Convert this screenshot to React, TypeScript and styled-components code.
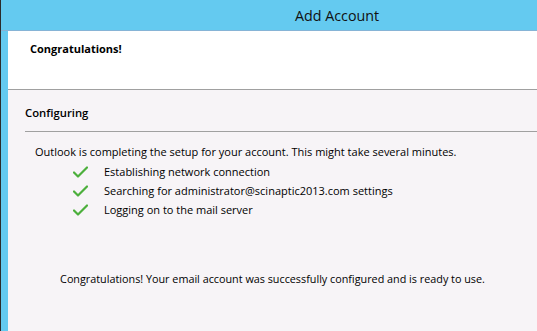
import styled, { createGlobalStyle } from 'styled-components';

const GlobalStyle = createGlobalStyle`
  html, body {
    margin: 0;
    padding: 0;
    background: #f7f4f7;
  }
  body {
    font-family: "Open Sans", "Noto Sans", "Liberation Sans", sans-serif;
    color: #000;
  }
`;

const Window = styled.div`
  width: 537px;
  height: 331px;
  display: flex;
  flex-direction: column;
  background: #64caf0;
  border-left: 1px solid #2b2b2b;
  box-sizing: border-box;
  overflow: hidden;
`;

const TitleBar = styled.div`
  height: 30px;
  display: flex;
  align-items: center;
  justify-content: center;
  padding-left: 136px;
  font-size: 14.3px;
  color: #111;
  border-bottom: 1px solid #86b4d6;
`;

const Body = styled.div`
  flex: 1;
  margin-left: 7px;
  display: flex;
  flex-direction: column;
  background: #f7f4f7;
`;

const Banner = styled.div`
  height: 59px;
  background: #fff;
  border-bottom: 1px solid #a0a0a0;
  padding: 10px 0 0 22px;
  box-sizing: border-box;
  font-size: 11px;
  font-weight: 700;
`;

const Section = styled.div`
  padding: 15px 0 0 17px;
`;

const SectionTitle = styled.div`
  font-size: 11.3px;
  font-weight: 600;
  padding-bottom: 11px;
  border-bottom: 1px solid #a0a0a0;
  margin-left: 0;
`;

const Content = styled.div`
  padding: 10px 0 0 10px;
  font-size: 11px;
`;

const Intro = styled.div`
  line-height: 19px;
`;

const Steps = styled.ul`
  list-style: none;
  margin: 0;
  padding: 1px 0 0 38px;
`;

const Step = styled.li`
  display: flex;
  align-items: center;
  height: 19px;
  gap: 16px;
`;

const Done = styled.div`
  text-align: center;
  font-size: 10.8px;
  padding-top: 52px;
`;

const Check = () => (
  <svg width="15" height="12" viewBox="0 0 15 12">
    <path d="M1 6.5 L5 10.5 L14 1.5" fill="none" stroke="#4caf3c" strokeWidth="2.2" strokeLinecap="round" strokeLinejoin="round" />
  </svg>
);

const steps = [
  'Establishing network connection',
  'Searching for administrator@scinaptic2013.com settings',
  'Logging on to the mail server',
];

export default function App() {
  return (
    <>
      <GlobalStyle />
      <Window>
        <TitleBar>Add Account</TitleBar>
        <Body>
          <Banner>Congratulations!</Banner>
          <Section>
            <SectionTitle>Configuring</SectionTitle>
            <Content>
              <Intro>Outlook is completing the setup for your account. This might take several minutes.</Intro>
              <Steps>
                {steps.map((s) => (
                  <Step key={s}>
                    <Check />
                    {s}
                  </Step>
                ))}
              </Steps>
            </Content>
          </Section>
          <Done>Congratulations! Your email account was successfully configured and is ready to use.</Done>
        </Body>
      </Window>
    </>
  );
}
